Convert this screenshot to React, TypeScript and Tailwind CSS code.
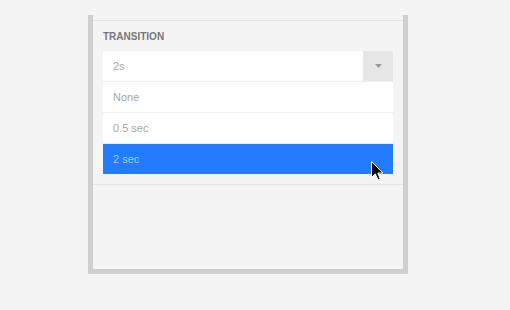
import React from "react";

export default function App() {
  return (
    <div
      className="relative w-[510px] h-[310px] bg-[#f4f4f4] pt-[15px] pl-[88px]"
      style={{ fontFamily: '"Liberation Sans", Arial, sans-serif' }}
    >
      <div className="w-[320px] h-[259px] border-x-[5px] border-b-[5px] border-[#cfcfcf] bg-[#f4f4f4] pt-[5px]">
        <div className="border-t border-b border-[#e6e6e6] px-[10px] pt-[10px] pb-[10px]">
          <div className="text-[10px] leading-[12px] font-bold text-[#777777] mb-[8px]">TRANSITION</div>
          <div className="flex h-[30px] bg-white">
            <div className="flex-1 flex items-center pl-[10px] text-[11px] text-[#a6a6a6]">2s</div>
            <div className="w-[30px] h-[30px] bg-[#e6e6e6] flex items-center justify-center">
              <svg width="7" height="4" viewBox="0 0 7 4">
                <path d="M0 0 L7 0 L3.5 4 Z" fill="#9a9a9a" />
              </svg>
            </div>
          </div>
          <div className="flex items-center h-[31px] border-t border-[#eeeeee] bg-white pl-[10px] text-[11px] text-[#a6a6a6]">None</div>
          <div className="flex items-center h-[31px] border-t border-[#eeeeee] bg-white pl-[10px] text-[11px] text-[#a6a6a6]">0.5 sec</div>
          <div className="flex items-center h-[31px] border-t border-[#eeeeee] bg-[#237bff] pl-[10px] text-[11px] text-[#a9c9ff]">2 sec</div>
        </div>
      </div>
      <svg
        className="absolute left-[371px] top-[161px]"
        width="13"
        height="20"
        viewBox="-0.5 -0.5 13 20"
      >
        <path
          d="M0 0 L0 16 L3.8 12.3 L6.5 18.5 L8.8 17.5 L6.2 11.5 L11.5 11.5 Z"
          fill="#000"
          stroke="#fff"
          strokeWidth="1"
          strokeLinejoin="round"
        />
      </svg>
    </div>
  );
}
